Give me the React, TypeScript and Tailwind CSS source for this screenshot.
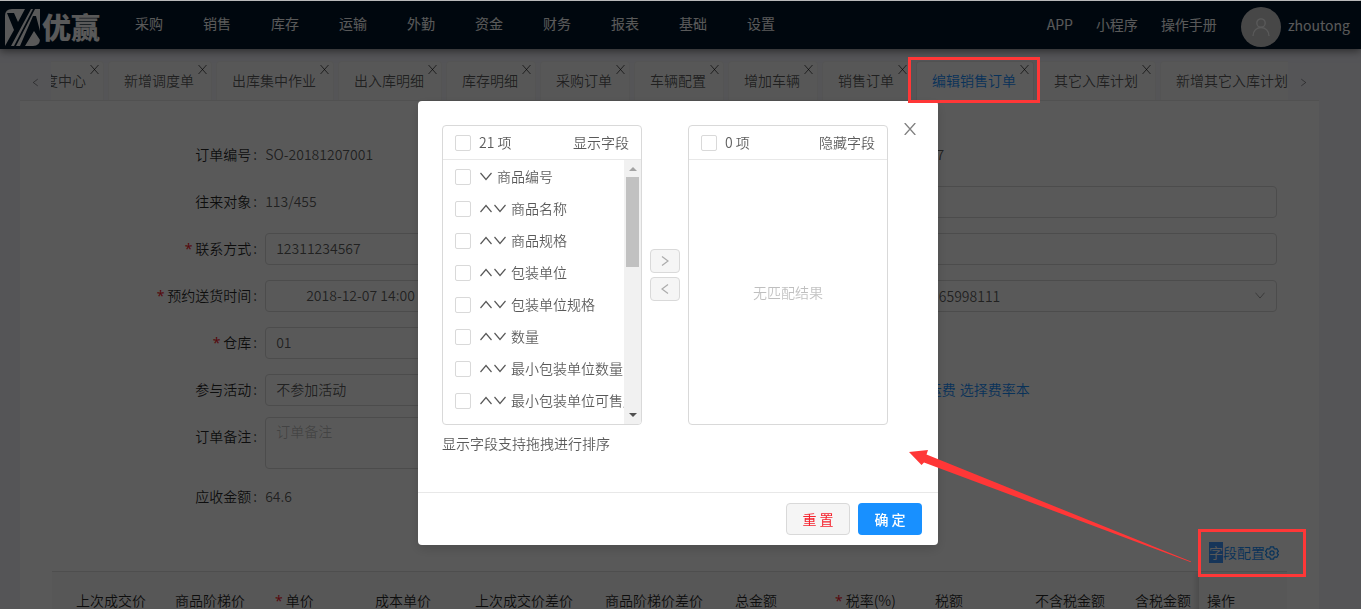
import React from "react";

const navItems = ["采购", "销售", "库存", "运输", "外勤", "资金", "财务", "报表", "基础", "设置"];

const tabs = [
  "调度中心",
  "新增调度单",
  "出库集中作业",
  "出入库明细",
  "库存明细",
  "采购订单",
  "车辆配置",
  "增加车辆",
  "销售订单",
  "编辑销售订单",
  "其它入库计划",
  "新增其它入库计划",
];
const activeTab = "编辑销售订单";

const visibleFields = [
  "商品编号",
  "商品名称",
  "商品规格",
  "包装单位",
  "包装单位规格",
  "数量",
  "最小包装单位数量",
  "最小包装单位可售库存",
];

type IconProps = { className?: string };

function Chevron({ dir, className }: IconProps & { dir: "up" | "down" | "left" | "right" }) {
  const paths = {
    up: "M.5 9 6 2.500l5.500 6.500",
    down: "M.5 2 6 8.500 11.500 2",
    left: "M9 1.500 3 6l6 4.500",
    right: "M3 1.500 9 6l-6 4.500",
  };
  return (
    <svg viewBox="0 0 12 12" className={className} fill="none" stroke="currentColor" strokeWidth="1.2" aria-hidden="true">
      <path d={paths[dir]} />
    </svg>
  );
}

function Cross({ className }: IconProps) {
  return (
    <svg viewBox="0 0 12 12" className={className} fill="none" stroke="currentColor" strokeWidth="1.300" aria-hidden="true">
      <path d="M.7 0 11.300 12M11.300 0 .7 12" />
    </svg>
  );
}

function Gear({ className }: IconProps) {
  return (
    <svg viewBox="0 0 14 14" className={className} fill="none" stroke="currentColor" strokeWidth="1.2" aria-hidden="true">
      <path d="M5.4 0.9h3.2l.5 1.7 1 .6 1.7-.5 1.6 2.7-1.2 1.2v.8l1.2 1.2-1.6 2.7-1.7-.5-1 .6-.5 1.7H5.4l-.5-1.7-1-.6-1.7.5L.6 8.6l1.2-1.2v-.8L.6 5.4l1.6-2.7 1.7.5 1-.6z" />
      <circle cx="7" cy="7" r="2.1" />
    </svg>
  );
}

function LogoMark() {
  return (
    <svg viewBox="0 0 36 37" className="h-[37px] w-9" aria-hidden="true">
      <path d="M7 0h28v30q0 7-7 7H0V7q0-7 7-7z" fill="#fff" />
      <path d="M2 4h7l4 9L20 0h6L6 37H0l9-16z" fill="#001529" />
      <path d="M28 0h2L11 37H9z" fill="#001529" />
      <path d="M28 7h3l4 15v9l-6-9-9 15h-5z" fill="#001529" />
    </svg>
  );
}

function Header() {
  return (
    <header className="relative z-10 flex h-12 shrink-0 items-center bg-[#001529] font-normal text-white shadow-[0_2px_8px_rgba(0,0,0,0.5)]">
      <a href="#home" aria-label="优赢" className="flex h-12 w-[135px] shrink-0 items-center gap-px pt-1 pl-[5px]">
        <LogoMark />
        <span className="pb-[2px] text-[29px] leading-8 font-black">优赢</span>
      </a>
      <nav className="flex flex-1 gap-10 pb-[3px]">
        {navItems.map((item) => (
          <a key={item} href="#nav" className="shrink-0">
            {item}
          </a>
        ))}
      </nav>
      <div className="flex shrink-0 items-center pt-px pr-[11px]">
        <div className="flex gap-[23px] pr-6 pb-[2px]">
          <a href="#app">APP</a>
          <a href="#mini">小程序</a>
          <a href="#manual">操作手册</a>
        </div>
        <button type="button" className="flex items-center gap-[7px] pt-[2px]">
          <span className="flex size-10 items-center justify-center rounded-full bg-[#ccc] text-white">
            <svg viewBox="0 0 18 18" className="size-[18px]" fill="none" stroke="currentColor" strokeWidth="1.3" aria-hidden="true">
              <circle cx="9" cy="5" r="4.2" />
              <path d="M1 18c0-5 3.500-8.500 8-8.500s8 3.500 8 8.500" />
            </svg>
          </span>
          <span className="pb-[3px]">zhoutong</span>
        </button>
      </div>
    </header>
  );
}

function TabBar() {
  return (
    <div className="flex h-[39px] items-center text-black/65">
      <button type="button" aria-label="向左" className="flex w-[31px] shrink-0 justify-center text-black/45">
        <Chevron dir="left" className="mt-1 size-[9px]" />
      </button>
      <div className="flex h-full min-w-0 flex-1 overflow-hidden">
        <div role="tablist" className="-ml-[37px] flex h-full gap-1">
          {tabs.map((tab) => (
            <div
              key={tab}
              className={
                tab === activeTab
                  ? "relative shrink-0 rounded-t border border-b-0 border-[#e8e8e8] bg-white text-[#1890ff]"
                  : "relative shrink-0 rounded-t border border-b-0 border-[#f0f0f0] bg-[#fafafa]"
              }
            >
              <button type="button" role="tab" aria-selected={tab === activeTab} className="h-full pr-[17px] pb-[2px] pl-[15px]">
                {tab}
              </button>
              <button type="button" aria-label={"关闭" + tab} className="absolute top-[3px] right-1 text-black/65">
                <Cross className="size-[9px]" />
              </button>
            </div>
          ))}
        </div>
      </div>
      <button type="button" aria-label="向右" className="flex w-[31px] shrink-0 justify-center text-black/45">
        <Chevron dir="right" className="mt-1 size-[9px]" />
      </button>
    </div>
  );
}

const boxClass = "h-8 w-full rounded border border-[#d9d9d9] bg-white px-[10px] pb-[2px] text-black/65";
const labelClass = "w-[34%] shrink-0 pr-2 text-right leading-[30px] text-black/85";

function Star() {
  return <span className="mr-[3px] font-['Noto_Sans'] font-normal text-[#f5222d]">*</span>;
}

function Field({
  id,
  label,
  required,
  children,
}: {
  id?: string;
  label: string;
  required?: boolean;
  children: React.ReactNode;
}) {
  return (
    <div className="flex h-8 px-[10px]">
      <label htmlFor={id} className={labelClass}>
        {required && <Star />}
        {label}
        <span className="ml-[2px]">:</span>
      </label>
      <div className="min-w-0 flex-1 leading-[30px] text-black/65">{children}</div>
    </div>
  );
}

function OrderForm() {
  return (
    <form className="grid grid-cols-2" onSubmit={(e) => e.preventDefault()}>
      <div className="flex flex-col gap-[15px]">
        <Field label="订单编号">SO-20181207001</Field>
        <Field label="往来对象">113/455</Field>
        <Field id="phone" label="联系方式" required>
          <input id="phone" className={boxClass} defaultValue="12311234567" />
        </Field>
        <Field id="delivery" label="预约送货时间" required>
          <div className="flex h-8 rounded border border-[#d9d9d9] pb-[2px] pl-10">
            <input id="delivery" className="h-full w-full bg-transparent" defaultValue="2018-12-07 14:00" />
          </div>
        </Field>
        <Field id="warehouse" label="仓库" required>
          <input id="warehouse" className={boxClass} defaultValue="01" />
        </Field>
        <Field id="activity" label="参与活动">
          <input id="activity" className={boxClass} defaultValue="不参加活动" />
        </Field>
        <div className="-mt-1 flex px-[10px]">
          <label htmlFor="remark" className={labelClass + " pt-1"}>
            订单备注<span className="ml-[2px]">:</span>
          </label>
          <textarea
            id="remark"
            placeholder="订单备注"
            className="block h-[52px] flex-1 resize-none rounded border border-[#d9d9d9] bg-white px-[10px] py-[3px] placeholder:text-black/25"
          />
        </div>
        <div className="-mt-[3px]">
          <Field label="应收金额">64.6</Field>
        </div>
      </div>
      <div className="flex flex-col gap-[15px]">
        <Field label="下单日期">20181207</Field>
        <Field id="contact" label="联系人">
          <input id="contact" className={boxClass} />
        </Field>
        <Field id="address" label="送货地址">
          <input id="address" className={boxClass} />
        </Field>
        <Field id="sales" label="业务员">
          <div className="relative">
            <select id="sales" className={boxClass + " appearance-none"} defaultValue="a">
              <option value="a">曾小姐 65998111</option>
            </select>
            <Chevron dir="down" className="pointer-events-none absolute top-[11px] right-3 size-[10px] text-black/35" />
          </div>
        </Field>
        <Field label="配送方式">自提</Field>
        <Field label="运费">
          <span className="flex gap-1 pl-[3px] text-[#1890ff]">
            <a href="#freight">计算总运费</a>
            <a href="#rate">选择费率本</a>
          </span>
        </Field>
      </div>
    </form>
  );
}

function OrderTable() {
  const th = "h-[57px] px-4 text-left font-[350]";
  return (
    <div className="overflow-hidden border-t border-[#e0e0e0] bg-[#fafafa]">
      <table className="w-full table-fixed border-collapse whitespace-nowrap text-black/85">
        <thead>
          <tr>
            <th className={th + " w-[107px] pl-6"}>上次成交价</th>
            <th className={th + " w-[100px]"}>商品阶梯价</th>
            <th className={th + " w-[100px]"}>
              <Star />
              单价
            </th>
            <th className={th + " w-[100px]"}>成本单价</th>
            <th className={th + " w-[130px]"}>上次成交价差价</th>
            <th className={th + " w-[130px]"}>商品阶梯价差价</th>
            <th className={th + " w-[100px]"}>总金额</th>
            <th className={th + " w-[100px]"}>
              <Star />
              税率(%)
            </th>
            <th className={th + " w-[100px]"}>税额</th>
            <th className={th + " w-[100px]"}>不含税金额</th>
            <th className={th}>含税金额</th>
            <th className="h-[57px] w-[88px] bg-[#fafafa] pl-2 text-left font-[350] shadow-[-3px_0_6px_rgba(0,0,0,0.15)]">操作</th>
          </tr>
        </thead>
      </table>
    </div>
  );
}

function Checkbox({ id, label }: { id: string; label?: string }) {
  return (
    <input
      id={id}
      type="checkbox"
      aria-label={label}
      className="size-4 shrink-0 appearance-none rounded-[2px] border border-[#d9d9d9] bg-white checked:border-[#1890ff] checked:bg-[#1890ff]"
    />
  );
}

function TransferList({
  id,
  count,
  title,
  children,
}: {
  id: string;
  count: string;
  title: string;
  children: React.ReactNode;
}) {
  return (
    <section className="flex h-[300px] w-[200px] flex-col overflow-hidden rounded border border-[#d9d9d9]">
      <div className="flex h-[34px] shrink-0 items-center border-b border-[#e8e8e8] px-3">
        <Checkbox id={id} />
        <label htmlFor={id} className="flex-1 pl-2">
          {count}
        </label>
        <span>{title}</span>
      </div>
      {children}
    </section>
  );
}

function FieldModal() {
  return (
    <div className="fixed inset-0 z-20 flex items-start justify-center bg-black/65 pt-[101px] pr-[5px]">
      <div
        role="dialog"
        aria-label="字段配置"
        className="relative w-[520px] rounded bg-white text-black/65 shadow-[0_4px_12px_rgba(0,0,0,0.15)]"
      >
        <button type="button" aria-label="关闭" className="absolute top-[22px] right-[22px] text-black/50">
          <Cross className="size-3" />
        </button>
        <div className="px-6 pt-6 pb-[38px]">
          <div className="flex items-center gap-2">
            <TransferList id="all-visible" count="21 项" title="显示字段">
              <div className="flex min-h-0 flex-1">
                <ul className="min-w-0 flex-1 overflow-hidden pt-px">
                  {visibleFields.map((name, i) => (
                    <li key={name} className="flex h-8 items-center pl-3 whitespace-nowrap">
                      <Checkbox id={"field-" + i} label={name} />
                      <span className="flex gap-[2px] pr-[5px] pl-[9px]">
                        {i > 0 && (
                          <button type="button" aria-label="上移">
                            <Chevron dir="up" className="size-3" />
                          </button>
                        )}
                        <button type="button" aria-label="下移">
                          <Chevron dir="down" className="size-3" />
                        </button>
                      </span>
                      <label htmlFor={"field-" + i} className="pb-[2px]">
                        {name}
                      </label>
                    </li>
                  ))}
                </ul>
                <div className="flex w-[17px] shrink-0 flex-col items-center justify-between bg-[#f1f1f1] pb-[7px]" aria-hidden="true">
                  <div className="flex w-full flex-col items-center px-[2px]">
                    <svg viewBox="0 0 8 4" className="mt-[7px] mb-[6px] h-1 w-2">
                      <path d="M0 4 4 0l4 4z" fill="#a3a3a3" />
                    </svg>
                    <div className="h-[90px] w-full bg-[#c1c1c1]" />
                  </div>
                  <svg viewBox="0 0 8 4" className="h-1 w-2">
                    <path d="M0 0h8L4 4z" fill="#505050" />
                  </svg>
                </div>
              </div>
            </TransferList>
            <div className="flex flex-col gap-1">
              <button
                type="button"
                aria-label="移到隐藏字段"
                className="flex h-6 w-[30px] items-center justify-center rounded border border-[#d9d9d9] bg-[#f5f5f5] text-black/30"
              >
                <Chevron dir="right" className="size-3" />
              </button>
              <button
                type="button"
                aria-label="移到显示字段"
                className="flex h-6 w-[30px] items-center justify-center rounded border border-[#d9d9d9] bg-[#f5f5f5] text-black/30"
              >
                <Chevron dir="left" className="size-3" />
              </button>
            </div>
            <TransferList id="all-hidden" count="0 项" title="隐藏字段">
              <div className="flex flex-1 items-center justify-center text-black/25">无匹配结果</div>
            </TransferList>
          </div>
          <p className="mt-[7px] leading-[22px]">显示字段支持拖拽进行排序</p>
        </div>
        <div className="flex justify-end gap-2 border-t border-[#e8e8e8] px-4 py-[10px]">
          <button type="button" className="h-8 w-16 rounded border border-[#d9d9d9] bg-[#f5f5f5] font-normal text-[#f5222d]">
            重 置
          </button>
          <button type="button" className="h-8 w-16 rounded bg-[#1890ff] font-medium text-white">
            确 定
          </button>
        </div>
      </div>
    </div>
  );
}

function Annotations() {
  return (
    <svg className="pointer-events-none fixed inset-0 z-30 h-full w-full" fill="none" aria-hidden="true">
      <rect x="909.5" y="58.500" width="129" height="43" stroke="#ff3737" strokeWidth="3" />
      <rect x="1199.500" y="530.500" width="105" height="45" stroke="#ff3737" strokeWidth="3" />
      <path d="M909 452 928 450 926.500 454.500 1191 561.500v.7L924 462.500 921.500 465z" fill="#ff3737" />
    </svg>
  );
}

export default function App() {
  return (
    <div className="flex h-screen flex-col overflow-hidden bg-[#f2f2fa] font-['Noto_Sans_CJK_SC','Noto_Sans',sans-serif] text-[14px] leading-[21px] font-[350]">
      <div className="relative z-30 h-px shrink-0 bg-[#b9b9b9]" />
      <Header />
      <main className="flex-1 pt-3 pr-[42px] pl-5">
        <TabBar />
        <div className="min-h-full border-t border-[#e8e8e8] bg-white px-8 pt-[38px]">
          <OrderForm />
          <div className="flex justify-end pt-[29px] pr-2 pb-2">
            <button type="button" className="flex items-center text-[#1890ff]">
              <span className="bg-[#3f97ff] text-white">字</span>
              <span>段配置</span>
              <Gear className="size-[14px]" />
            </button>
          </div>
          <OrderTable />
        </div>
      </main>
      <FieldModal />
      <Annotations />
    </div>
  );
}
